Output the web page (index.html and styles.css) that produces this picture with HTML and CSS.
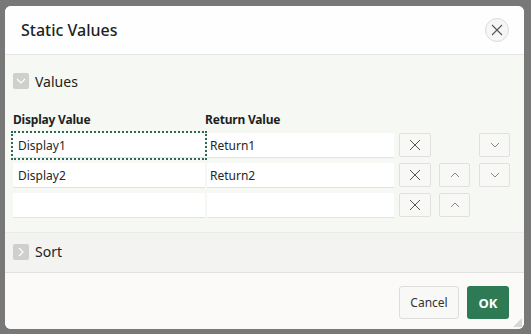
FILE: index.html
```html
<!DOCTYPE html>
<html lang="en">
<head>
    <meta charset="UTF-8">
    <meta name="viewport" content="width=device-width, initial-scale=1.0">
    <title>Static Values</title>
    <link rel="stylesheet" href="styles.css">
</head>
<body>
    <div class="dialog">
        <div class="dialog-header">
            <h1 class="dialog-title">Static Values</h1>
            <button class="close-button" aria-label="Close">
                <svg width="12" height="12" viewBox="0 0 12 12"><path d="M1 1L11 11M11 1L1 11" stroke="#555" stroke-width="1.1" fill="none"/></svg>
            </button>
        </div>

        <div class="dialog-body">
            <div class="region values-region">
                <div class="region-header">
                    <span class="toggle">
                        <svg width="10" height="6" viewBox="0 0 10 6"><path d="M1 1L5 5L9 1" stroke="#fff" stroke-width="1.2" fill="none"/></svg>
                    </span>
                    <span class="region-title">Values</span>
                </div>

                <div class="value-grid">
                    <div class="col-label">Display Value</div>
                    <div class="col-label">Return Value</div>
                    <div></div><div></div><div></div>

                    <input class="cell-input focused" type="text" value="Display1">
                    <input class="cell-input return-input" type="text" value="Return1">
                    <button class="icon-btn remove-btn"><svg width="12" height="12" viewBox="0 0 12 12"><path d="M1 1L11 11M11 1L1 11" stroke="#555" stroke-width="1" fill="none"/></svg></button>
                    <div></div>
                    <button class="icon-btn move-btn"><svg width="10" height="6" viewBox="0 0 10 6"><path d="M1 1L5 5L9 1" stroke="#888" stroke-width="1" fill="none"/></svg></button>

                    <input class="cell-input" type="text" value="Display2">
                    <input class="cell-input return-input" type="text" value="Return2">
                    <button class="icon-btn remove-btn"><svg width="12" height="12" viewBox="0 0 12 12"><path d="M1 1L11 11M11 1L1 11" stroke="#555" stroke-width="1" fill="none"/></svg></button>
                    <button class="icon-btn move-btn"><svg width="10" height="6" viewBox="0 0 10 6"><path d="M1 5L5 1L9 5" stroke="#888" stroke-width="1" fill="none"/></svg></button>
                    <button class="icon-btn move-btn"><svg width="10" height="6" viewBox="0 0 10 6"><path d="M1 1L5 5L9 1" stroke="#888" stroke-width="1" fill="none"/></svg></button>

                    <input class="cell-input" type="text" value="">
                    <input class="cell-input return-input" type="text" value="">
                    <button class="icon-btn remove-btn"><svg width="12" height="12" viewBox="0 0 12 12"><path d="M1 1L11 11M11 1L1 11" stroke="#555" stroke-width="1" fill="none"/></svg></button>
                    <button class="icon-btn move-btn"><svg width="10" height="6" viewBox="0 0 10 6"><path d="M1 5L5 1L9 5" stroke="#888" stroke-width="1" fill="none"/></svg></button>
                    <div></div>
                </div>
            </div>

            <div class="region sort-region">
                <div class="region-header">
                    <span class="toggle">
                        <svg width="6" height="10" viewBox="0 0 6 10"><path d="M1 1L5 5L1 9" stroke="#fff" stroke-width="1.2" fill="none"/></svg>
                    </span>
                    <span class="region-title">Sort</span>
                </div>
            </div>
        </div>

        <div class="dialog-footer">
            <button class="btn cancel-btn">Cancel</button>
            <button class="btn ok-btn">OK</button>
        </div>

        <span class="resize-grip"></span>
    </div>
</body>
</html>
```

FILE: styles.css
```css
body {
    margin: 0;
    padding: 6px 7px 5px 5px;
    background-color: #787878;
    font-family: "Noto Sans", "Open Sans", sans-serif;
    color: #262626;
}
.dialog {
    position: relative;
    width: 519px;
    height: 323px;
    background-color: #fcfcfb;
    border-radius: 6px;
    display: flex;
    flex-direction: column;
    overflow: hidden;
}
.dialog-header {
    height: 49px;
    box-sizing: border-box;
    display: flex;
    align-items: center;
    justify-content: space-between;
    padding: 0 15px 0 16px;
    background-color: #fefefe;
    border-bottom: 1px solid #e6e6e4;
    flex-shrink: 0;
}
.dialog-title {
    margin: 0;
    font-size: 16px;
    font-weight: 500;
    color: #1f1f1f;
}
.close-button {
    width: 24px;
    height: 24px;
    border-radius: 50%;
    border: 1px solid #dcdcdc;
    background-color: #f6f6f6;
    padding: 0;
    display: flex;
    align-items: center;
    justify-content: center;
}
.dialog-body {
    height: 218px;
    display: flex;
    flex-direction: column;
    flex-shrink: 0;
}
.region {
    padding: 0 8px;
    box-sizing: border-box;
}
.values-region {
    background-color: #f5f8f3;
    padding-top: 8px;
    height: 177px;
}
.sort-region {
    background-color: #f3f3f2;
    border-top: 1px solid #ebebea;
    border-bottom: 1px solid #e2e2e0;
    height: 41px;
    display: flex;
    align-items: center;
    padding-bottom: 2px;
}
.region-header {
    height: 36px;
    display: flex;
    align-items: center;
    gap: 6px;
}
.toggle {
    width: 16px;
    height: 16px;
    border-radius: 2px;
    background-color: #cfcfce;
    display: flex;
    align-items: center;
    justify-content: center;
}
.region-title {
    font-size: 14px;
    color: #222;
}
.value-grid {
    display: grid;
    grid-template-columns: 192px 189px 37px 39px 40px;
    grid-template-rows: 21px;
    grid-auto-rows: 25px;
    row-gap: 5px;
    margin-top: 8px;
}
.value-grid > :nth-child(5n+2),
.value-grid > :nth-child(5n+3),
.value-grid > :nth-child(5n+4),
.value-grid > :nth-child(5n) {
    justify-self: end;
}
.value-grid > .col-label {
    justify-self: start;
}
.col-label {
    font-size: 12px;
    font-weight: 700;
    line-height: 16px;
    color: #1f1f1f;
    align-self: end;
    letter-spacing: -0.2px;
}
.cell-input {
    width: 100%;
    box-sizing: border-box;
    height: 25px;
    border: none;
    border-bottom: 1px solid #e2e4e0;
    background-color: #fff;
    font-family: inherit;
    font-size: 12px;
    color: #262626;
    padding: 0 0 0 5px;
}
.return-input {
    width: 187px;
    padding-left: 3px;
}
.focused {
    outline: 2px dotted #2d6a56;
    outline-offset: 0;
}
.icon-btn {
    height: 24px;
    box-sizing: border-box;
    border: 1px solid #e0e0de;
    border-radius: 2px;
    background-color: #f8f8f7;
    padding: 0;
    display: flex;
    align-items: center;
    justify-content: center;
}
.remove-btn { width: 32px; }
.move-btn { width: 31px; }
.dialog-footer {
    height: 56px;
    box-sizing: border-box;
    display: flex;
    justify-content: flex-end;
    align-items: flex-start;
    gap: 8px;
    padding: 13px 15px 0 0;
    background-color: #fbfaf8;
    flex-shrink: 0;
}
.btn {
    height: 33px;
    border-radius: 3px;
    font-family: inherit;
    font-size: 12px;
}
.cancel-btn {
    width: 60px;
    border: 1px solid #dddddb;
    background-color: #f8f8f7;
    color: #333;
}
.ok-btn {
    width: 42px;
    border: none;
    background-color: #2e7a55;
    color: #fff;
    font-weight: 700;
    font-size: 13px;
}
.resize-grip {
    position: absolute;
    right: 2px;
    bottom: 2px;
    width: 0;
    height: 0;
    border-left: 9px solid transparent;
    border-bottom: 9px solid #d6d6d4;
}
```
